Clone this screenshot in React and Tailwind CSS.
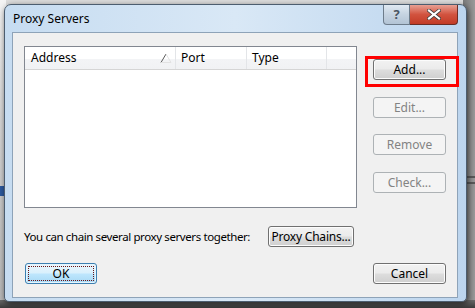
import React from "react";

const font = { fontFamily: '"Noto Sans", "Open Sans", sans-serif' };

function Btn({ children, disabled, className = "" }) {
  return (
    <div
      className={
        "flex h-[21px] items-center justify-center whitespace-nowrap rounded-[3px] border text-[12px] leading-none " +
        (disabled
          ? "border-[#adb2b5] bg-[#f4f4f4] text-[#838383] "
          : "border-[#707070] bg-[linear-gradient(#f2f2f2_0%,#ebebeb_48%,#dddddd_52%,#cfcfcf_100%)] text-black shadow-[inset_0_0_0_1px_#fcfcfc] ") +
        className
      }
    >
      {children}
    </div>
  );
}

export default function App() {
  return (
    <div className="relative h-[308px] w-[475px] overflow-hidden bg-[#dcdcdc]" style={font}>
      {/* background desktop bits */}
      <div className="absolute left-0 top-0 h-[308px] w-[6px] bg-[linear-gradient(#f4f4f4,#d6d6d6_40%,#b8b8b8)]" />
      <div className="absolute left-0 top-[186px] h-[10px] w-[5px] bg-[#2c5aa0]" />
      <div className="absolute right-0 top-0 h-[308px] w-[12px] bg-[linear-gradient(90deg,#7a7a7a,#9a9a9a)]" />
      <div className="absolute right-0 top-[176px] h-[2px] w-[12px] bg-[#5a5a5a]" />
      <div className="absolute right-0 top-[182px] h-[2px] w-[12px] bg-[#5a5a5a]" />
      <div className="absolute bottom-0 left-0 h-[8px] w-[475px] bg-[linear-gradient(#6a6a6a,#3a3a3a)]" />

      {/* window */}
      <div className="absolute left-[4px] top-[4px] flex h-[298px] w-[463px] flex-col rounded-t-[7px] rounded-b-[5px] border border-[#4c5d6f] bg-[linear-gradient(90deg,#c6dcf1,#d9e8f6_50%,#bcd5ee)] shadow-[1px_2px_6px_rgba(0,0,0,0.6)]">
        {/* title bar */}
        <div className="flex h-[27px] shrink-0 items-start justify-between">
          <div className="pl-[8px] pt-[5px] text-[12px] text-black">Proxy Servers</div>
          <div className="mr-[8px] flex">
            <div className="flex h-[20px] w-[27px] items-center justify-center rounded-bl-[4px] border border-t-0 border-[#6d7c8b] bg-[linear-gradient(#e0e9f2,#c5d3e1_50%,#b3c4d5)] text-[13px] font-bold leading-none text-[#4a5562]">
              ?
            </div>
            <div className="flex h-[20px] w-[48px] items-center justify-center rounded-br-[4px] border border-l-0 border-t-0 border-[#6b2d25] bg-[linear-gradient(#e8a093,#d2533f_50%,#c23b26)]">
              <svg width="14" height="11" viewBox="0 0 14 11">
                <path d="M2 1.5 L12 9.5 M12 1.5 L2 9.5" stroke="#3b3b3b" strokeWidth="3.6" strokeLinecap="square" />
                <path d="M2 1.5 L12 9.5 M12 1.5 L2 9.5" stroke="#ffffff" strokeWidth="2.2" strokeLinecap="square" />
              </svg>
            </div>
          </div>
        </div>

        {/* client area */}
        <div className="ml-[7px] flex h-[266px] w-[446px] flex-col border border-[#8ea3b8] bg-[#f0f0f0] px-[11px]">
          <div className="flex">
            {/* list view */}
            <div className="mt-[13px] flex h-[162px] w-[333px] flex-col border border-[#828790] bg-white">
              <div className="flex h-[23px] items-stretch border-b border-[#d5d5d5] bg-[linear-gradient(#ffffff_0%,#ffffff_55%,#f3f4f6_56%,#f1f2f4_100%)] text-[12px] text-black">
                <div className="relative flex w-[151px] items-center border-r border-[#e3e5e8] pl-[6px]">
                  Address
                  <svg className="absolute right-[3px] top-[6px]" width="12" height="10" viewBox="0 0 12 10">
                    <path d="M1 9.5 L6 1" stroke="#5a5a5a" strokeWidth="1" fill="none" />
                    <path d="M6 1 L11 9.5 L1 9.5" stroke="#e2e2e2" strokeWidth="1" fill="none" />
                  </svg>
                </div>
                <div className="flex w-[71px] items-center border-r border-[#e3e5e8] pl-[5px]">Port</div>
                <div className="flex w-[80px] items-center border-r border-[#e3e5e8] pl-[5px]">Type</div>
                <div className="flex-1" />
              </div>
            </div>

            {/* buttons */}
            <div className="ml-[16px] mt-[26px] flex w-[73px] flex-col">
              <div className="relative">
                <Btn>Add...</Btn>
                <div className="pointer-events-none absolute -left-[8px] -right-[13px] -top-[3px] -bottom-[7px] border-[3px] border-[#ff0000]" />
              </div>
              <Btn disabled className="mt-[17px]">Edit...</Btn>
              <Btn disabled className="mt-[16px]">Remove</Btn>
              <Btn disabled className="mt-[17px]">Check...</Btn>
            </div>
          </div>

          {/* chain row */}
          <div className="mt-[18px] flex h-[21px] items-center">
            <div className="w-[244px] whitespace-nowrap text-[11.5px] tracking-[-0.4px] text-black">You can chain several proxy servers together:</div>
            <Btn className="w-[86px] tracking-[-0.2px]">Proxy Chains...</Btn>
          </div>

          {/* bottom row */}
          <div className="mt-[16px] flex h-[21px] items-center justify-between pl-[1px] pr-[0px]">
            <div className="relative flex h-[21px] w-[72px] items-center justify-center rounded-[3px] border border-[#3c7fb1] bg-[linear-gradient(#eaf6fd_0%,#d9f0fc_48%,#bee6fd_52%,#a7d9f5_100%)] text-[12px] text-black shadow-[inset_0_0_0_1px_#e5f4fc]">
              <div className="absolute inset-[2px] border border-dotted border-[#6b1515]" />
              OK
            </div>
            <Btn className="w-[73px]">Cancel</Btn>
          </div>
        </div>
      </div>
    </div>
  );
}
